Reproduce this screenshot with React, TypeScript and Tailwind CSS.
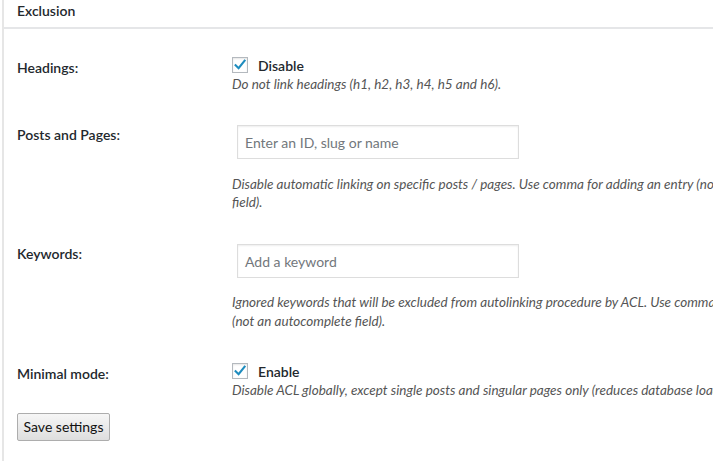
import React from "react";

function Check() {
  return (
    <span className="relative inline-block w-4 h-4 shrink-0 border border-[#b4b9be] bg-white shadow-[inset_0_1px_2px_rgba(0,0,0,0.1)]">
      <svg viewBox="0 0 16 16" className="absolute left-[-1px] top-[-1px] w-4 h-4">
        <path d="M3.6 8.2 L6.6 11.2 L12.6 3.6" fill="none" stroke="#1e8cbe" strokeWidth="2.1" strokeLinecap="square" />
      </svg>
    </span>
  );
}

export default function App() {
  return (
    <div className="w-[713px] h-[461px] overflow-hidden bg-white font-['Lato','Liberation_Sans',sans-serif] text-[#23282d]">
      <div className="ml-[2px] h-full border-l-2 border-[#e6e6e6]">
        <div className="h-[29px] border-b-2 border-[#e5e6e8] pl-[13px] pt-[1px]">
          <h2 className="text-[14px] leading-[20px] font-semibold">Exclusion</h2>
        </div>
        <div className="pl-[13px]">
          {/* Headings */}
          <div className="grid grid-cols-[215px_1fr]">
            <div className="pt-[29px] text-[14px] leading-[20px] font-semibold">Headings:</div>
            <div className="pt-[26px]">
              <label className="flex items-center gap-[10px] h-[20px] text-[14px] font-semibold">
                <Check />
                <span>Disable</span>
              </label>
              <p className="text-[13.5px] leading-[18px] italic text-[#555] whitespace-nowrap">
                Do not link headings (h1, h2, h3, h4, h5 and h6).
              </p>
            </div>
          </div>
          {/* Posts and Pages */}
          <div className="grid grid-cols-[215px_1fr]">
            <div className="pt-[32px] text-[14px] leading-[20px] font-semibold">Posts and Pages:</div>
            <div className="pt-[32px]">
              <div className="ml-[5px] w-[282px] h-[34px] border border-[#ddd] bg-white shadow-[inset_0_1px_2px_rgba(0,0,0,0.07)] flex items-center px-[7px] text-[14px] text-[#72777c]">
                Enter an ID, slug or name
              </div>
              <p className="mt-[16px] text-[13.5px] leading-[18px] italic text-[#555] whitespace-nowrap">
                Disable automatic linking on specific posts / pages. Use comma for adding an entry (not an autocomplete
                <br />
                field).
              </p>
            </div>
          </div>
          {/* Keywords */}
          <div className="grid grid-cols-[215px_1fr]">
            <div className="pt-[33px] text-[14px] leading-[20px] font-semibold">Keywords:</div>
            <div className="pt-[33px]">
              <div className="ml-[5px] w-[282px] h-[34px] border border-[#ddd] bg-white shadow-[inset_0_1px_2px_rgba(0,0,0,0.07)] flex items-center px-[7px] text-[14px] text-[#72777c]">
                Add a keyword
              </div>
              <p className="mt-[15px] text-[13.5px] leading-[19px] italic text-[#555] whitespace-nowrap">
                Ignored keywords that will be excluded from autolinking procedure by ACL. Use comma for adding an entry
                <br />
                (not an autocomplete field).
              </p>
            </div>
          </div>
          {/* Minimal mode */}
          <div className="grid grid-cols-[215px_1fr]">
            <div className="pt-[33px] text-[14px] leading-[20px] font-semibold">Minimal mode:</div>
            <div className="pt-[30px]">
              <label className="flex items-center gap-[10px] h-[20px] text-[14px] font-semibold">
                <Check />
                <span>Enable</span>
              </label>
              <p className="text-[13.5px] leading-[18px] italic text-[#555] whitespace-nowrap">
                Disable ACL globally, except single posts and singular pages only (reduces database load)
              </p>
            </div>
          </div>
          <button className="mt-[14px] w-[93px] h-[28px] border border-[#adadad] rounded-[2px] bg-gradient-to-b from-[#f6f6f6] to-[#dedede] text-[14px] leading-[20px] text-[#111]">
            Save settings
          </button>
        </div>
      </div>
    </div>
  );
}
